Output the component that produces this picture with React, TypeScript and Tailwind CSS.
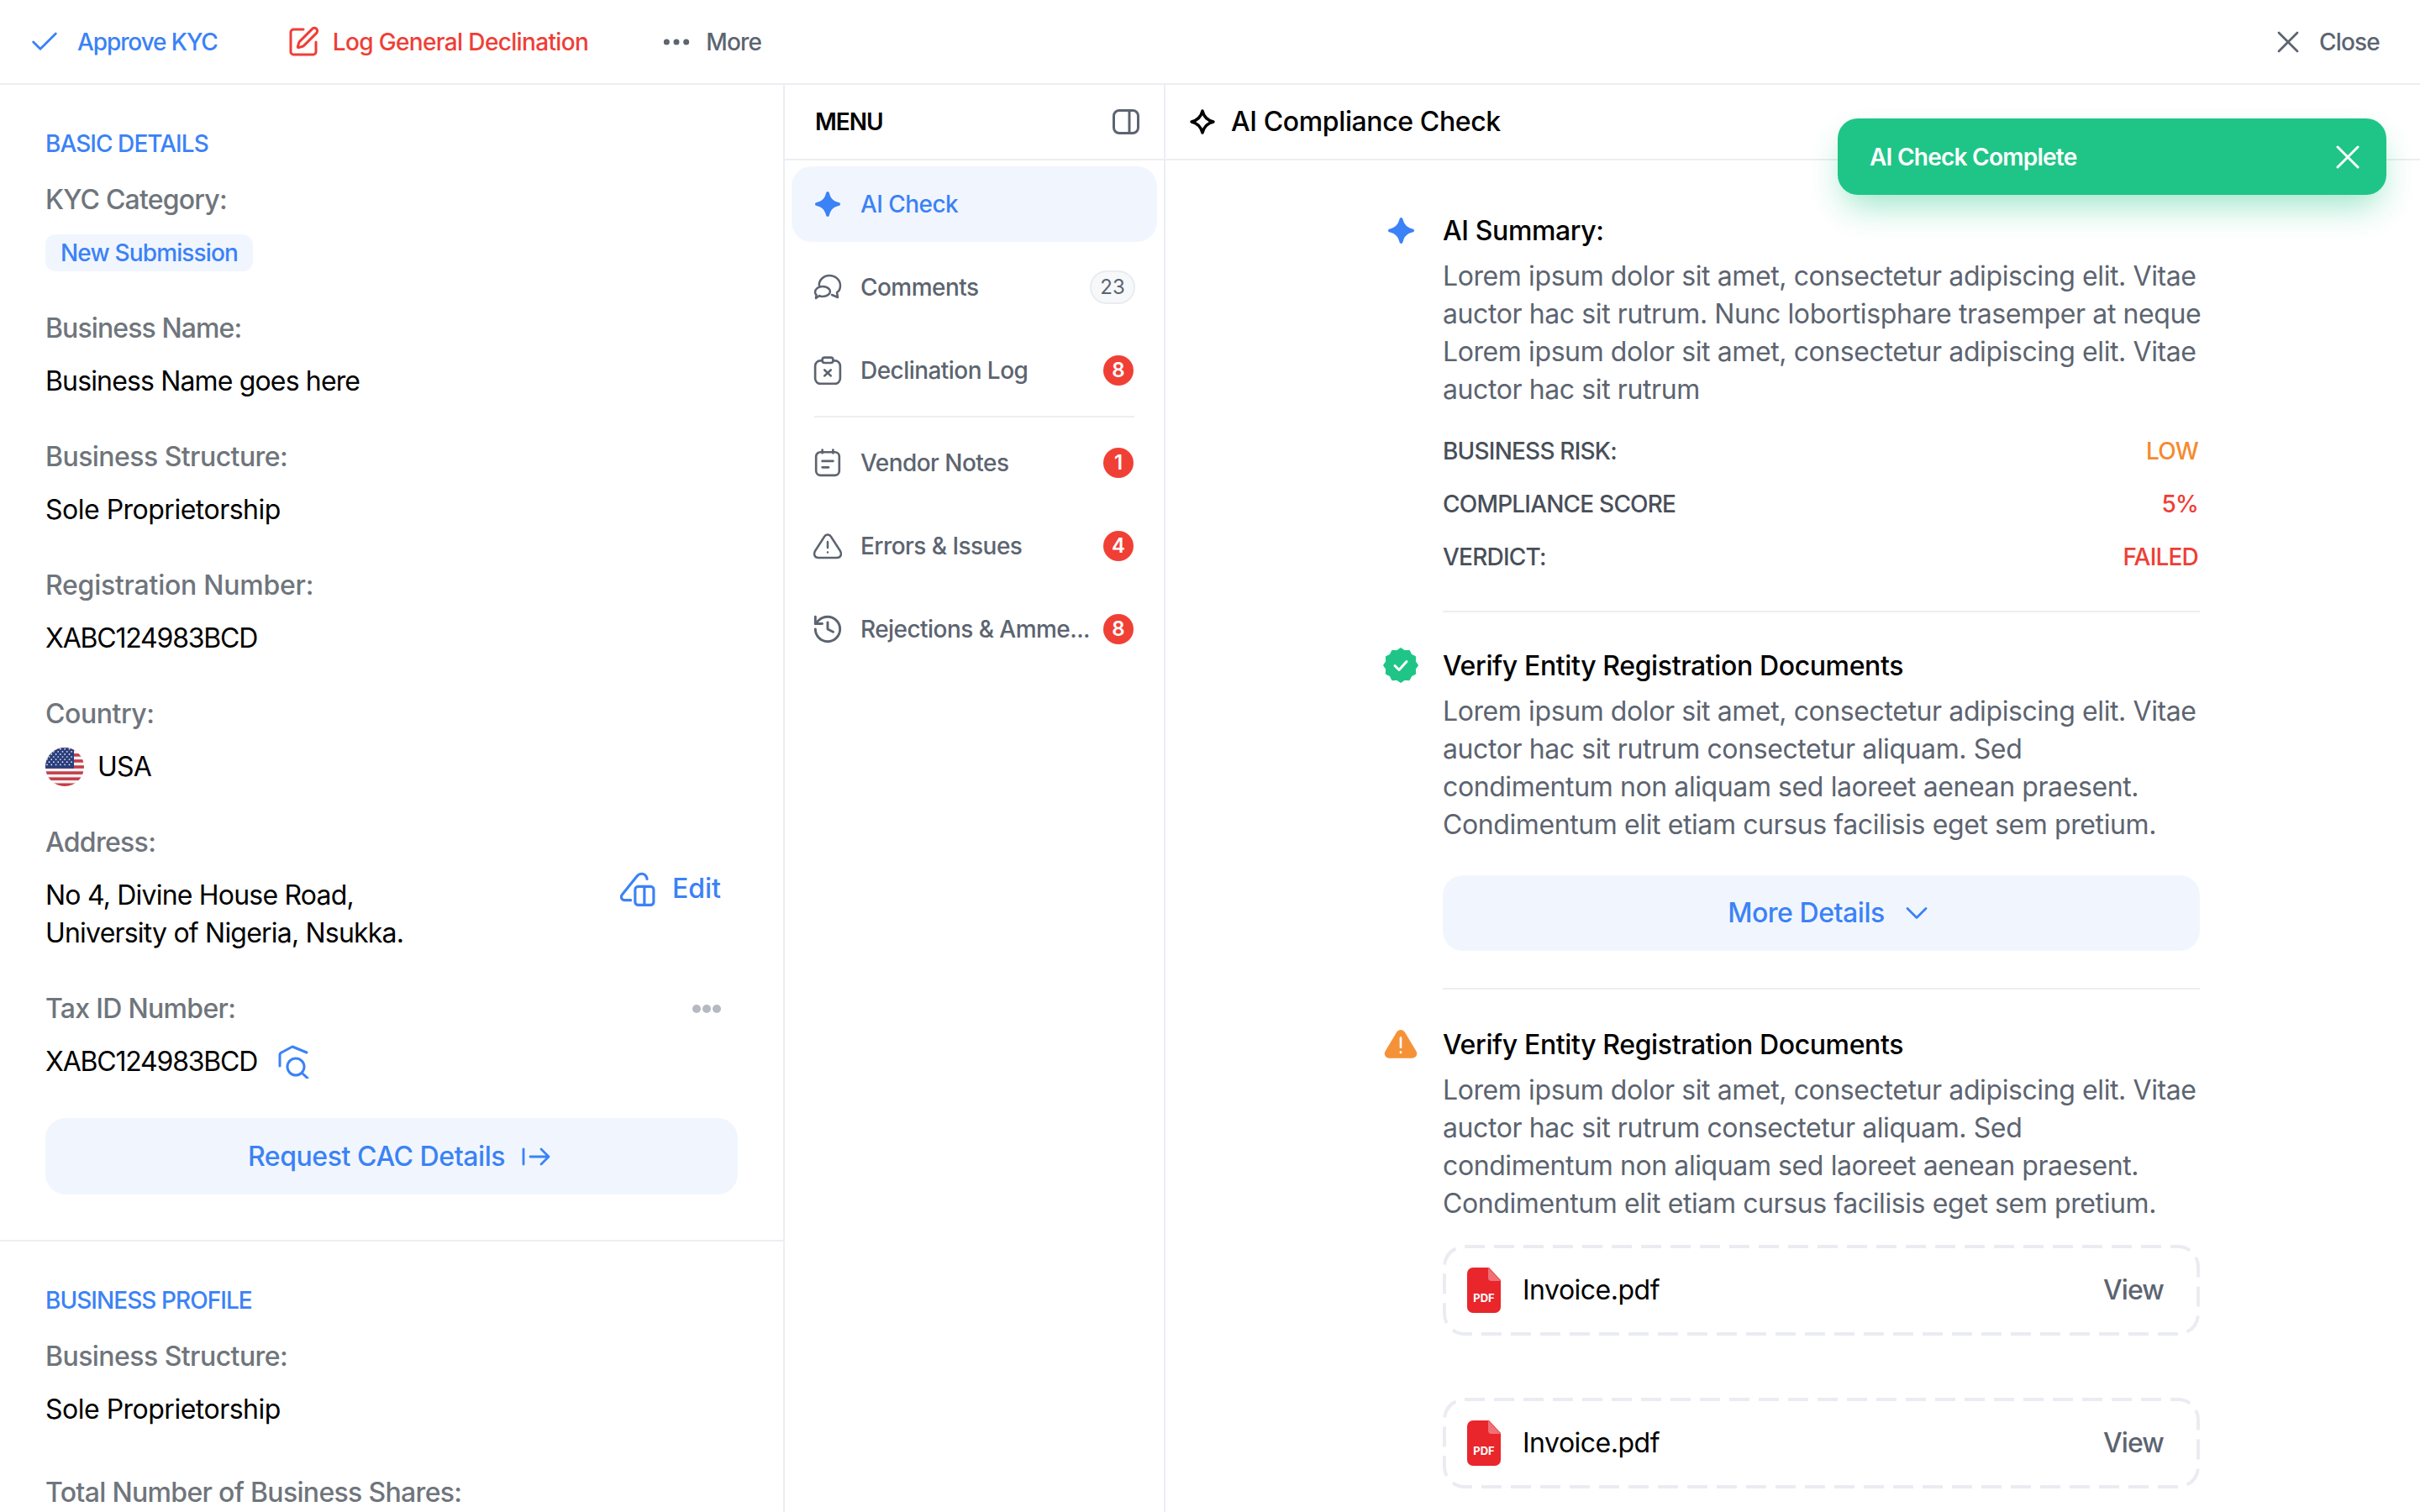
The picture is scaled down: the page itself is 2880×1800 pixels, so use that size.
import { Check, ChevronDown, History, Ellipsis, SquarePen, X } from 'lucide-react';

const fontStack = "font-['Inter','Liberation_Sans',sans-serif]";

function Sparkle({ className }: { className?: string }) {
  return (
    <svg viewBox="0 0 32 32" className={className} fill="currentColor">
      <path d="M16 1c1.200 0 1.700 1 2.200 2.700 1.500 5.400 4.400 8.600 10.800 10.300 1.500.4 2 .9 2 2s-.5 1.600-2 2c-6.400 1.700-9.300 4.900-10.800 10.300-.5 1.700-1 2.700-2.200 2.700s-1.700-1-2.200-2.700C12.300 22.900 9.400 19.700 3 18c-1.500-.4-2-.9-2-2s.5-1.600 2-2c6.400-1.700 9.300-4.900 10.800-10.300C14.300 2 14.800 1 16 1Z" />
    </svg>
  );
}

function SparkleOutline({ className }: { className?: string }) {
  return (
    <svg viewBox="0 0 32 32" className={className} fill="none" stroke="currentColor" strokeWidth="3.400" strokeLinejoin="round">
      <path d="M16 3c1.800 7.500 5.500 11.200 13 13-7.500 1.800-11.200 5.500-13 13-1.800-7.500-5.500-11.200-13-13 7.500-1.800 11.200-5.500 13-13Z" />
    </svg>
  );
}

function CommentsIcon({ className }: { className?: string }) {
  return (
    <svg viewBox="0 0 34 32" className={className} fill="none" stroke="currentColor" strokeWidth="2.500" strokeLinecap="round" strokeLinejoin="round">
      <path d="M7 14C6 8 12 2 19 2c7 0 13 5 13 12 0 4-2 7-4 8l1 6-7-3" />
      <path d="M2 22c0-4 4-7 9-7s9 3 9 6c0 3-4 6-9 6-1 0-3 0-4-1l-4 3 .5-4C2.500 24 2 23 2 22Z" />
    </svg>
  );
}

function ClipboardXIcon({ className }: { className?: string }) {
  return (
    <svg viewBox="0 0 32 32" className={className} fill="none" stroke="currentColor" strokeWidth="2.500" strokeLinecap="round" strokeLinejoin="round">
      <path d="M10 5H8a6 6 0 0 0-6 6v14a6 6 0 0 0 6 6h16a6 6 0 0 0 6-6V11a6 6 0 0 0-6-6h-2" />
      <rect x="10" y="1.500" width="12" height="6" rx="2.500" />
      <path d="m12.500 15.500 7 6.500M19.500 15.500l-7 6.500" />
    </svg>
  );
}

function NotesIcon({ className }: { className?: string }) {
  return (
    <svg viewBox="0 0 32 32" className={className} fill="none" stroke="currentColor" strokeWidth="2.500" strokeLinecap="round" strokeLinejoin="round">
      <rect x="3" y="4" width="26" height="26" rx="5" />
      <path d="M10 1.500V5M22 1.500V5M10 14h12M10 21h7" />
    </svg>
  );
}

function WarningOutline({ className }: { className?: string }) {
  return (
    <svg viewBox="0 0 34 32" className={className} fill="none" stroke="currentColor" strokeWidth="2.500" strokeLinecap="round" strokeLinejoin="round">
      <path d="M13 5c2-3.500 6-3.500 8 0L32 22c2 4 .5 8-4 8H6c-4.500 0-6-4-4-8Z" />
      <path d="M17 11v7M17 23.500h.02" />
    </svg>
  );
}

function HistoryIcon({ className }: { className?: string }) {
  return <History className={`${className} scale-[1.15]`} strokeWidth={1.8} />;
}

function EditIcon({ className }: { className?: string }) {
  return (
    <svg viewBox="14 12 40 40" className={className} fill="none" stroke="currentColor" strokeWidth="3" strokeLinecap="round" strokeLinejoin="round">
      <path d="M26 45h-7c-3 0-5-3.500-2.500-6.500L33 18c3-4 9-4 11 1l.5 2" />
      <rect x="31" y="29.500" width="21" height="21" rx="3.500" />
      <path d="M41.500 29.500v21" />
    </svg>
  );
}

function SearchDocIcon({ className }: { className?: string }) {
  return (
    <svg viewBox="10 8 40 40" className={className} fill="none" stroke="currentColor" strokeWidth="3" strokeLinecap="round" strokeLinejoin="round">
      <path d="M14 33V20c0-1.500.6-2.500 2-3l13-7 17 7" />
      <circle cx="33" cy="34" r="10" />
      <path d="m41 42 6 5.500" />
    </svg>
  );
}

const flagStripes = [0, 2, 4, 6, 8, 10, 12];
const starRows = [1.700, 4.800, 7.900, 11, 14.100, 17.200, 20.300];

function UsaFlag() {
  return (
    <svg viewBox="0 0 46 46" className="w-[46px] h-[46px] shrink-0">
      <defs>
        <clipPath id="flag-clip">
          <circle cx="23" cy="23" r="23" />
        </clipPath>
      </defs>
      <g clipPath="url(#flag-clip)">
        <rect width="46" height="46" fill="#f5f2f3" />
        {flagStripes.map((n) => (
          <rect key={n} y={n * 3.54} width="46" height="3.540" fill="#c43d45" />
        ))}
        <rect width="34" height="24.800" fill="#2a3f7c" />
        {starRows.map((y, i) =>
          [0, 1, 2, 3, 4, 5].map((c) => (
            <circle key={`${i}-${c}`} cx={(i % 2 ? 4.600 : 2) + c * 5.300} cy={y} r="0.850" fill="#f2f4fa" />
          ))
        )}
      </g>
    </svg>
  );
}

function starburstPath() {
  const pts: string[] = [];
  for (let i = 0; i < 24; i++) {
    const r = i % 2 === 0 ? 20.500 : 18;
    const a = (Math.PI * 2 * i) / 24 - Math.PI / 2;
    pts.push(`${(21 + r * Math.cos(a)).toFixed(2)} ${(21 + r * Math.sin(a)).toFixed(2)}`);
  }
  return `M${pts.join('L')}Z`;
}

function BadgeCheck({ className }: { className?: string }) {
  return (
    <svg viewBox="0 0 42 42" className={className}>
      <path fill="#1fc587" stroke="#1fc587" strokeWidth="1" strokeLinejoin="round" d={starburstPath()} />
      <path d="m14 21.500 5 5 9-10" fill="none" stroke="#fff" strokeWidth="3" strokeLinecap="round" strokeLinejoin="round" />
    </svg>
  );
}

function WarningFilled({ className }: { className?: string }) {
  return (
    <svg viewBox="0 0 44 38" className={className}>
      <path fill="#f59238" d="M16.500 3.500c2.500-4.300 8.500-4.300 11 0l14.800 24.800c2.500 4.300-.5 9.200-5.500 9.200H7.200c-5 0-8-4.900-5.500-9.200Z" />
      <path d="M22 11v12M22 29.500v.5" fill="none" stroke="#fff" strokeWidth="3" strokeLinecap="round" />
    </svg>
  );
}

function PdfIcon() {
  return (
    <svg viewBox="0 0 40 54" className="w-10 h-[54px] shrink-0">
      <path fill="#e8262c" d="M7 0h19l14 15v32a7 7 0 0 1-7 7H7a7 7 0 0 1-7-7V7a7 7 0 0 1 7-7Z" />
      <path fill="#f07076" d="M25 0l15 16H29a4 4 0 0 1-4-4Z" />
      <text x="20" y="41" textAnchor="middle" fontSize="13" fontWeight="700" fill="#fff" fontFamily="Inter, sans-serif">PDF</text>
    </svg>
  );
}

function Label({ children, className = 'tracking-[-0.55px]' }: { children: React.ReactNode; className?: string }) {
  return <div className={`text-[32px] leading-[45px] font-medium text-[#6f757c] ${className}`}>{children}</div>;
}

function Field({ label, value, labelClass, valueClass = 'tracking-[-0.75px]' }: { label: string; value?: string; labelClass?: string; valueClass?: string }) {
  return (
    <div className="flex flex-col gap-[18px]">
      <Label className={labelClass}>{label}</Label>
      {value && <div className={`text-[32px] leading-[45px] text-black ${valueClass}`}>{value}</div>}
    </div>
  );
}

function SectionTitle({ children }: { children: string }) {
  return <div className="text-[28px] leading-9 font-medium tracking-[-0.95px] text-[#3b82f6]">{children}</div>;
}

const menuItems = [
  { label: 'Comments', Icon: CommentsIcon, pill: '23' },
  { label: 'Declination Log', Icon: ClipboardXIcon, badge: '8' },
];

const menuItems2 = [
  { label: 'Vendor Notes', Icon: NotesIcon, badge: '1' },
  { label: 'Errors & Issues', Icon: WarningOutline, badge: '4' },
  { label: 'Rejections & Amme...', Icon: HistoryIcon, badge: '8' },
];

function MenuRow({ label, Icon, badge, pill }: { label: string; Icon: any; badge?: string; pill?: string }) {
  return (
    <div className="flex items-center h-[90px] pl-[26px] pr-7">
      <Icon className="w-[34px] h-[34px] text-[#5c6470] shrink-0" />
      <span className="ml-[22px] flex-1 text-[28px] font-medium tracking-[-0.55px] text-[#5c6470] whitespace-nowrap">{label}</span>
      {badge && (
        <span className="w-9 h-9 rounded-full bg-[#f04035] text-white text-[24px] font-semibold flex items-center justify-center">{badge}</span>
      )}
      {pill && (
        <span className="w-[54px] h-10 -mr-0.5 rounded-full border-2 border-[#e9ecf1] bg-[#f7f8fa] text-[#5c6470] text-[24px] flex items-center justify-center">{pill}</span>
      )}
    </div>
  );
}

function RiskRow({ label, value, color }: { label: string; value: string; color: string }) {
  return (
    <div className="flex justify-between items-center h-[63px] pr-0.5 text-[28px] font-medium tracking-[-0.8px]">
      <span className="text-[#484f59]">{label}</span>
      <span className={color}>{value}</span>
    </div>
  );
}

function DashedBox({ children }: { children?: React.ReactNode }) {
  return (
    <div className="relative h-[108px] flex items-center pl-[29px] pr-[43px]">
      <svg className="absolute inset-0 w-full h-full" fill="none">
        <rect x="2" y="2" width="897" height="104" rx="24" stroke="#eaecf2" strokeWidth="4" strokeDasharray="24 11" />
      </svg>
      {children}
    </div>
  );
}

function FileRow() {
  return (
    <DashedBox>
      <PdfIcon />
      <span className="ml-[26px] flex-1 text-[32px] tracking-[-0.5px] text-black">Invoice.pdf</span>
      <span className="text-[32px] font-medium tracking-[-0.9px] text-[#5c6470]">View</span>
    </DashedBox>
  );
}

const bodyText = 'mt-[9px] text-[32px] leading-[45px] tracking-[-0.4px] text-[#5c6470] whitespace-nowrap';

const lorem2 = (
  <>
    Lorem ipsum dolor sit amet, consectetur adipiscing elit. Vitae
    <br />
    auctor hac sit rutrum consectetur aliquam. Sed
    <br />
    condimentum non aliquam sed laoreet aenean praesent.
    <br />
    Condimentum elit etiam cursus facilisis eget sem pretium.
  </>
);

function CheckBlock({ icon, title, children }: { icon: React.ReactNode; title: string; children: React.ReactNode }) {
  return (
    <div className="relative">
      <div className="absolute -left-[72px] top-0 w-[44px] h-[44px] flex items-center justify-center">{icon}</div>
      <h3 className="text-[32px] leading-[45px] font-medium tracking-[-0.38px] text-black">{title}</h3>
      {children}
    </div>
  );
}

export default function App() {
  return (
    <div className={`${fontStack} w-[2880px] h-[1800px] overflow-hidden bg-white flex flex-col relative`}>
      {/* top actions */}
      <div className="h-[101px] shrink-0 border-b-2 border-[#eceef2] flex items-center pl-[33px] pr-[48px] text-[28px] font-medium">
        <Check className="w-10 h-10 text-[#3b82f6]" strokeWidth={1.7} />
        <span className="ml-[19px] tracking-[-1.1px] text-[#3b82f6]">Approve KYC</span>
        <SquarePen className="ml-[82px] w-10 h-10 text-[#ef3e36]" strokeWidth={1.8} />
        <span className="ml-[15px] tracking-[-0.65px] text-[#ef3e36]">Log General Declination</span>
        <Ellipsis className="ml-[85px] w-10 h-10 text-[#5c6470]" strokeWidth={2.2} />
        <span className="ml-[15px] tracking-[-0.8px] text-[#5c6470]">More</span>
        <X className="ml-auto w-11 h-11 text-[#5c6470]" strokeWidth={1.5} />
        <span className="ml-[15px] tracking-[-0.8px] text-[#5c6470]">Close</span>
      </div>

      <div className="flex flex-1 min-h-0">
        {/* details column */}
        <div className="w-[934px] shrink-0 border-r-2 border-[#eceef2] flex flex-col">
          <div className="px-[54px] pt-[52px] pb-[54px] border-b-2 border-[#eceef2]">
            <SectionTitle>BASIC DETAILS</SectionTitle>
            <div className="mt-[26px] flex flex-col gap-[45px]">
              <div className="flex flex-col gap-[18px]">
                <Label className="tracking-[-0.8px]">KYC Category:</Label>
                <div className="h-[45px] pt-px">
                  <span className="inline-block h-[44px] leading-[44px] px-[18px] rounded-xl bg-[#f1f6fe] text-[28px] font-medium tracking-[-0.85px] text-[#3b82f6]">New Submission</span>
                </div>
              </div>
              <Field label="Business Name:" labelClass="tracking-[-0.9px]" value="Business Name goes here" valueClass="tracking-[-0.85px]" />
              <Field label="Business Structure:" value="Sole Proprietorship" valueClass="tracking-[-0.5px]" />
              <Field label="Registration Number:" labelClass="tracking-[-0.25px]" value="XABC124983BCD" valueClass="tracking-[-1.2px]" />
              <div className="flex flex-col gap-[18px]">
                <Label className="tracking-[-0.45px]">Country:</Label>
                <div className="flex items-center gap-4 h-[45px] text-[32px] tracking-[-0.75px] text-black">
                  <UsaFlag />
                  USA
                </div>
              </div>
              <div className="flex flex-col gap-[18px]">
                <Label className="tracking-[-0.7px]">Address:</Label>
                <div className="flex justify-between items-start pr-5">
                  <div className="text-[32px] leading-[45px] tracking-[-0.8px] text-black">
                    No 4, Divine House Road,
                    <br />
                    University of Nigeria, Nsukka.
                  </div>
                  <div className="flex items-center gap-5 text-[#3b82f6] text-[32px] font-medium -mt-[9px]">
                    <EditIcon className="w-[42px] h-[42px]" />
                    Edit
                  </div>
                </div>
              </div>
              <div className="flex flex-col gap-[18px]">
                <div className="flex justify-between items-center pr-5">
                  <Label className="tracking-[-0.7px]">Tax ID Number:</Label>
                  <span className="flex gap-0.5">
                    <i className="w-2.5 h-2.5 rounded-full bg-[#b4b9c2]" />
                    <i className="w-2.5 h-2.5 rounded-full bg-[#b4b9c2]" />
                    <i className="w-2.5 h-2.5 rounded-full bg-[#b4b9c2]" />
                  </span>
                </div>
                <div className="flex items-center gap-[23px] h-[45px] text-[32px] tracking-[-1.2px] text-black">
                  XABC124983BCD
                  <SearchDocIcon className="w-10 h-10 text-[#3b82f6]" />
                </div>
              </div>
              <div className="h-[91px] pl-[18px] rounded-3xl bg-[#f1f6fe] flex items-center justify-center gap-5 text-[32px] font-medium tracking-[-0.43px] text-[#3b82f6]">
                Request CAC Details
                <svg viewBox="0 0 34 24" className="w-[34px] h-6" fill="none" stroke="currentColor" strokeWidth="2.800" strokeLinecap="round" strokeLinejoin="round">
                  <path d="M2 3v18M10 12h22M23 3l9 9-9 9" />
                </svg>
              </div>
            </div>
          </div>
          <div className="px-[54px] pt-[52px]">
            <SectionTitle>BUSINESS PROFILE</SectionTitle>
            <div className="mt-[26px] flex flex-col gap-[45px]">
              <Field label="Business Structure:" value="Sole Proprietorship" valueClass="tracking-[-0.5px]" />
              <div className="mt-[9px]">
                <Field label="Total Number of Business Shares:" labelClass="tracking-[-0.68px]" />
              </div>
            </div>
          </div>
        </div>

        {/* menu column */}
        <div className="w-[453px] shrink-0 border-r-2 border-[#eceef2] flex flex-col">
          <div className="h-[90px] shrink-0 border-b-2 border-[#eceef2] flex items-center justify-between pl-9 pr-[29px]">
            <span className="text-[28px] font-semibold tracking-[-1px] text-black">MENU</span>
            <svg viewBox="0 0 32 30" className="w-8 h-[30px] text-[#5c6470]" fill="none" stroke="currentColor" strokeWidth="3">
              <rect x="1.500" y="1.500" width="29" height="27" rx="6.500" />
              <path d="M20 1.500v27" />
            </svg>
          </div>
          <div className="mt-[7px] mx-2 flex flex-col gap-[9px]">
            <div className="flex items-center h-[90px] pl-[27px] rounded-3xl bg-[#f1f6fe]">
              <Sparkle className="w-8 h-8 text-[#3b82f6]" />
              <span className="ml-[23px] text-[28px] font-medium tracking-[-0.55px] text-[#3b82f6]">AI Check</span>
            </div>
            {menuItems.map((item) => (
              <MenuRow key={item.label} {...item} />
            ))}
            <div className="h-0.5 mx-[27px] bg-[#eceef2]" />
            {menuItems2.map((item) => (
              <MenuRow key={item.label} {...item} />
            ))}
          </div>
        </div>

        {/* compliance column */}
        <div className="flex-1 min-w-0 flex flex-col">
          <div className="h-[90px] shrink-0 border-b-2 border-[#eceef2] flex items-center pl-7 gap-[18px]">
            <SparkleOutline className="w-8 h-8 text-black" />
            <span className="text-[32px] font-medium tracking-[-0.39px] text-black">AI Compliance Check</span>
          </div>
          <div className="ml-[330px] w-[901px] pt-[61px] flex flex-col">
            <CheckBlock icon={<Sparkle className="w-[33px] h-[33px] text-[#3b82f6]" />} title="AI Summary:">
              <p className={bodyText}>
                Lorem ipsum dolor sit amet, consectetur adipiscing elit. Vitae
                <br />
                auctor hac sit rutrum. Nunc lobortisphare trasemper at neque
                <br />
                Lorem ipsum dolor sit amet, consectetur adipiscing elit. Vitae
                <br />
                auctor hac sit rutrum
              </p>
              <div className="mt-[19px] flex flex-col">
                <RiskRow label="BUSINESS RISK:" value="LOW" color="text-[#f58a2f]" />
                <RiskRow label="COMPLIANCE SCORE" value="5%" color="text-[#ef3e36]" />
                <RiskRow label="VERDICT:" value="FAILED" color="text-[#ef3e36]" />
              </div>
            </CheckBlock>
            <div className="mt-[33px] mb-[41px] h-0.5 bg-[#eceef2]" />
            <CheckBlock icon={<BadgeCheck className="w-[42px] h-[42px]" />} title="Verify Entity Registration Documents">
              <p className={bodyText}>{lorem2}</p>
              <div className="mt-[38px] h-[90px] pl-[24px] rounded-3xl bg-[#f1f6fe] flex items-center justify-center gap-4 text-[32px] font-medium tracking-[-0.46px] text-[#3b82f6]">
                More Details
                <ChevronDown className="w-11 h-11" strokeWidth={1.5} />
              </div>
            </CheckBlock>
            <div className="mt-[44px] mb-[43px] h-0.5 bg-[#eceef2]" />
            <CheckBlock icon={<WarningFilled className="w-10 h-9" />} title="Verify Entity Registration Documents">
              <p className={bodyText}>{lorem2}</p>
              <div className="mt-[27px] flex flex-col gap-[74px]">
                <FileRow />
                <FileRow />
              </div>
              <div className="mt-[28px]">
                <DashedBox />
              </div>
            </CheckBlock>
          </div>
        </div>
      </div>

      {/* toast */}
      <div className="absolute left-[2187px] top-[141px] w-[653px] h-[91px] rounded-3xl bg-[#1fc587] shadow-[0_20px_40px_-8px_rgba(31,197,135,0.45)] flex items-center justify-between pl-[38px] pr-[22px]">
        <span className="text-[28px] font-semibold tracking-[-0.75px] text-white">AI Check Complete</span>
        <X className="w-12 h-12 text-white" strokeWidth={1.500} />
      </div>
    </div>
  );
}
